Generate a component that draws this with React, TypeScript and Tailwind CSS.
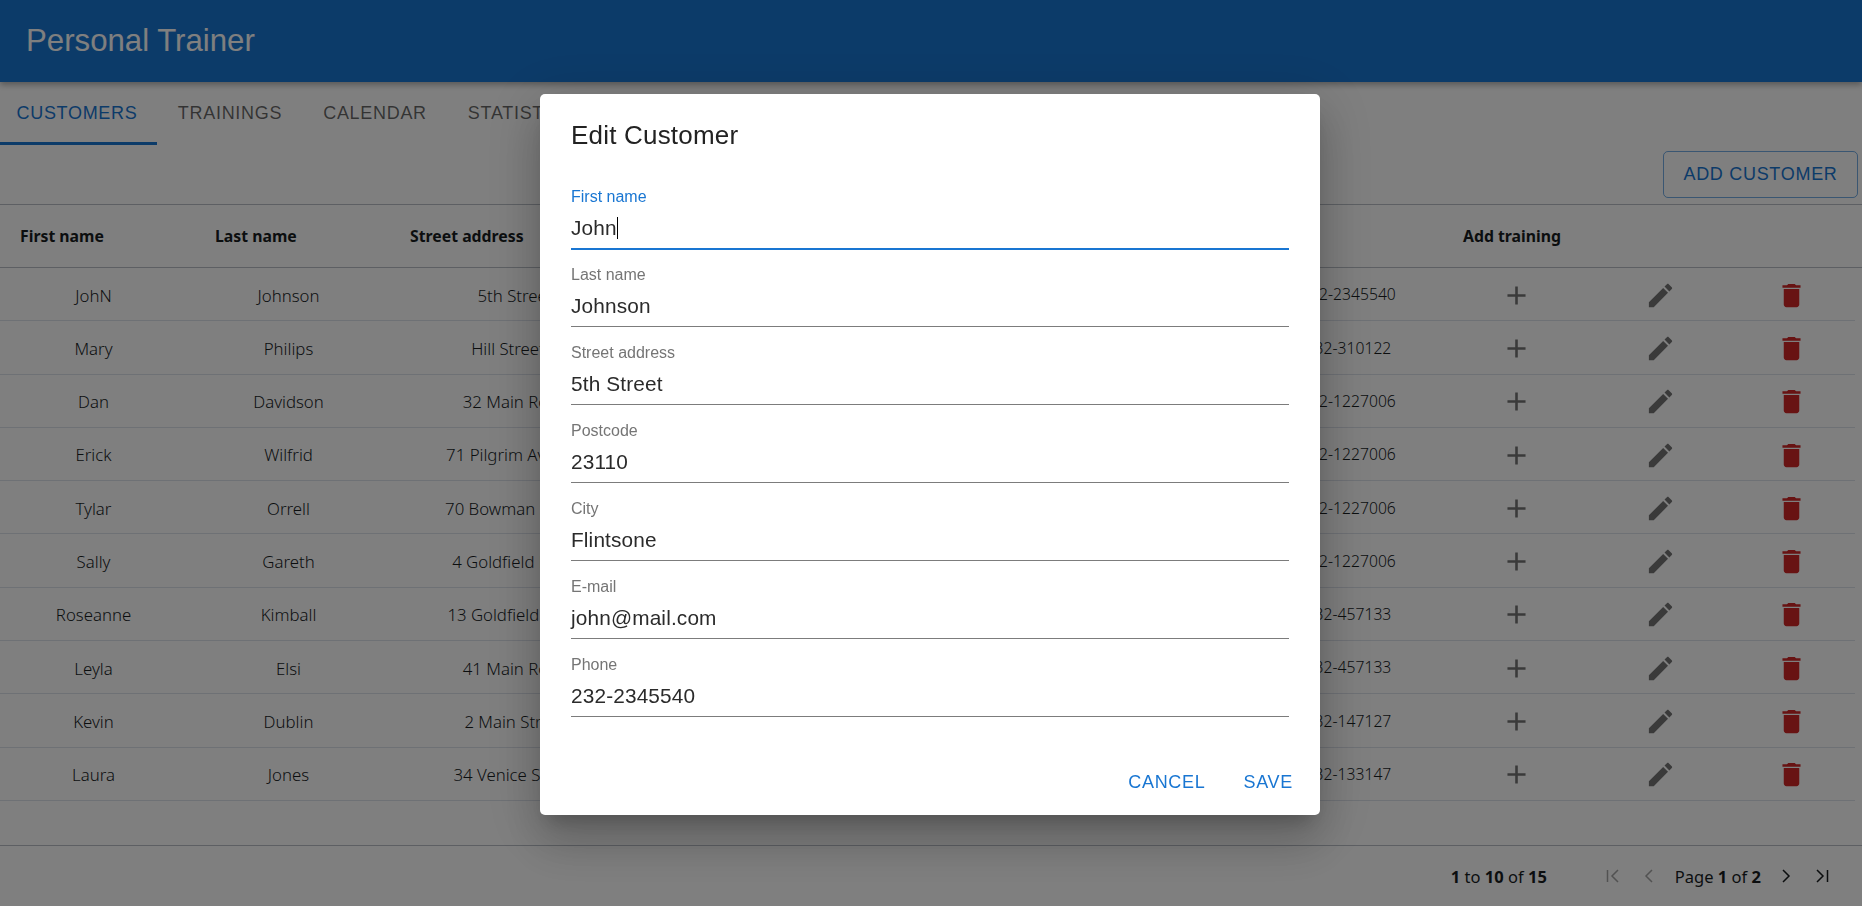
import { useState } from 'react'

const customers = [
  { first: 'JohN', last: 'Johnson', street: '5th Street', code: '23110', city: 'Flintsone', email: 'john@mail.com', phone: '232-2345540' },
  { first: 'Mary', last: 'Philips', street: 'Hill Street 5', code: '23110', city: 'Flintsone', email: 'mary@mail.com', phone: '232-310122' },
  { first: 'Dan', last: 'Davidson', street: '32 Main Road', code: '23110', city: 'Flintsone', email: 'dan@mail.com', phone: '232-1227006' },
  { first: 'Erick', last: 'Wilfrid', street: '71 Pilgrim Avenue', code: '23110', city: 'Chevy Chase', email: 'erick@mail.com', phone: '232-1227006' },
  { first: 'Tylar', last: 'Orrell', street: '70 Bowman Street', code: '23110', city: 'Chevy Chase', email: 'tylar@mail.com', phone: '232-1227006' },
  { first: 'Sally', last: 'Gareth', street: '4 Goldfield Road', code: '23110', city: 'Flintsone', email: 'sally@mail.com', phone: '232-1227006' },
  { first: 'Roseanne', last: 'Kimball', street: '13 Goldfield Road', code: '23110', city: 'Flintsone', email: 'rose@mail.com', phone: '232-457133' },
  { first: 'Leyla', last: 'Elsi', street: '41 Main Road', code: '23110', city: 'Flintsone', email: 'leyla@mail.com', phone: '232-457133' },
  { first: 'Kevin', last: 'Dublin', street: '2 Main Street', code: '23110', city: 'Flintsone', email: 'kevin@mail.com', phone: '232-147127' },
  { first: 'Laura', last: 'Jones', street: '34 Venice Street', code: '23110', city: 'Flintsone', email: 'laura@mail.com', phone: '232-133147' },
]

const fields = [
  { label: 'First name', value: 'John' },
  { label: 'Last name', value: 'Johnson' },
  { label: 'Street address', value: '5th Street' },
  { label: 'Postcode', value: '23110' },
  { label: 'City', value: 'Flintsone' },
  { label: 'E-mail', value: 'john@mail.com' },
  { label: 'Phone', value: '232-2345540' },
]

const gridCols = 'grid grid-cols-[195px_195px_250px_150px_160px_300px_193px_147px_140px_122px]'

function MuiIcon({ d, className }: { d: string; className?: string }) {
  return (
    <svg viewBox="0 0 24 24" className={className} fill="currentColor">
      <path d={d} />
    </svg>
  )
}

function PagerIcon({ d, disabled }: { d: string; disabled?: boolean }) {
  return (
    <svg
      viewBox="0 0 16 16"
      className={`h-4 w-4 ${disabled ? 'text-[#a4a4a4]' : 'text-[#181d1f]'}`}
      fill="none"
      stroke="currentColor"
      strokeWidth="1.5"
    >
      <path d={d} />
    </svg>
  )
}

function CustomerRow({ row }: { row: (typeof customers)[number] }) {
  return (
    <div className={`${gridCols} h-[53.3px] w-[1855px] items-center border-b border-[#dde2eb] pt-[2px] text-[16.8px] font-light text-[#181d1f]`}>
      <div className="pr-2 text-center">{row.first}</div>
      <div className="pr-2 text-center">{row.last}</div>
      <div className="text-center whitespace-nowrap">{row.street}</div>
      <div className="text-center">{row.code}</div>
      <div className="text-center">{row.city}</div>
      <div className="text-center">{row.email}</div>
      <div className="pl-1 text-center text-[15.7px]">{row.phone}</div>
      <div className="flex justify-center text-[#757575]">
        <MuiIcon className="h-[31px] w-[31px]" d="M19 13h-6v6h-2v-6H5v-2h6V5h2v6h6v2z" />
      </div>
      <div className="flex justify-center text-[#757575]">
        <MuiIcon
          className="h-[31px] w-[31px]"
          d="M3 17.25V21h3.75L17.81 9.94l-3.75-3.75L3 17.25zM20.71 7.04c.39-.39.39-1.02 0-1.41l-2.34-2.34c-.39-.39-1.02-.39-1.41 0l-1.83 1.83 3.75 3.75 1.83-1.83z"
        />
      </div>
      <div className="flex justify-center text-[#d02626]">
        <MuiIcon
          className="h-[31px] w-[31px]"
          d="M6 19c0 1.1.9 2 2 2h8c1.1 0 2-.9 2-2V7H6v12zM19 4h-3.5l-1-1h-5l-1 1H5v2h14V4z"
        />
      </div>
    </div>
  )
}

function EditField({ label, value, focused }: { label: string; value: string; focused?: boolean }) {
  return (
    <div
      className={`flex flex-col justify-end ${
        focused ? 'mb-[-1px] h-[79px] border-b-2 border-[#1976d2]' : 'h-[78px] border-b border-[#7c7c7c]'
      }`}
    >
      <div className={`text-[16px] leading-[20px] ${focused ? 'text-[#1976d2]' : 'text-[#757575]'}`}>{label}</div>
      <div className="mt-[7px] mb-[6px] flex h-[28px] items-center text-[20.8px] tracking-[0.15px] text-[#2b2b2b]">
        {value}
        {focused && <span className="h-[22px] w-px bg-black" />}
      </div>
    </div>
  )
}

export default function App() {
  const [open] = useState(true)

  return (
    <div className="relative h-[906px] w-[1862px] overflow-hidden bg-white font-['Liberation_Sans',Arial,sans-serif]">
      <header className="flex h-[82px] items-center bg-[#1976d2] pl-[26px] shadow-[0_3px_6px_rgba(0,0,0,0.3)]">
        <h1 className="text-[31.2px] text-white">Personal Trainer</h1>
      </header>

      <nav className="flex h-[63px] text-[18px] tracking-[0.7px] text-black/60">
        <div className="flex w-[157px] items-center justify-center border-y-[3px] border-t-transparent border-b-[#1976d2] pr-[3px] text-[#1976d2]">CUSTOMERS</div>
        <div className="flex w-[146px] items-center justify-center">TRAININGS</div>
        <div className="flex w-[144px] items-center justify-center">CALENDAR</div>
        <div className="flex w-[150px] items-center justify-center">STATISTICS</div>
      </nav>

      <div className="flex h-[59px] items-start justify-end pt-[6px] pr-[4px]">
        <button className="flex h-[47px] w-[195px] items-center justify-center rounded-[5px] border border-[#1976d2]/60 text-[18px] tracking-[0.7px] text-[#1976d2]">
          ADD CUSTOMER
        </button>
      </div>

      <div className="font-['Noto_Sans',sans-serif]">
        <div className={`${gridCols} h-[64px] items-center border-y border-[#babfc7] pt-[2px] text-[15.8px] font-bold text-[#181d1f]`}>
          <div className="pl-5">First name</div>
          <div className="pl-5">Last name</div>
          <div className="pl-5">Street address</div>
          <div className="pl-5">Postcode</div>
          <div className="pl-5">City</div>
          <div className="pl-5">E-mail</div>
          <div className="pl-5">Phone</div>
          <div className="pl-5">Add training</div>
        </div>

        {customers.map((row) => (
          <CustomerRow key={row.first} row={row} />
        ))}

        <div className="h-[44px]" />
        <div className="flex h-[61px] items-center justify-end border-t border-[#babfc7] pr-[32px] text-[16.5px] text-[#181d1f]">
          <span className="pt-[3px]">
            <b>1</b> to <b>10</b> of <b>15</b>
          </span>
          <div className="ml-[58px] flex items-center">
            <PagerIcon disabled d="M2.5 2v12M13 2L7 8l6 6" />
            <div className="ml-[20px]">
              <PagerIcon disabled d="M11 2L5 8l6 6" />
            </div>
            <span className="ml-[18px] pt-[3px]">
              Page <b>1</b> of <b>2</b>
            </span>
            <div className="ml-[17px]">
              <PagerIcon d="M5 2l6 6-6 6" />
            </div>
            <div className="ml-[20px]">
              <PagerIcon d="M3 2l6 6-6 6M13.5 2v12" />
            </div>
          </div>
        </div>
      </div>

      {open && (
        <div className="fixed inset-0 flex items-start justify-center bg-black/50">
          <div className="mt-[94px] ml-[-2px] h-[721px] w-[780px] rounded-[5px] bg-white px-[31px] shadow-[0_13px_18px_-8px_rgba(0,0,0,0.2),0_29px_45px_3px_rgba(0,0,0,0.14),0_11px_55px_10px_rgba(0,0,0,0.12)]">
            <h2 className="mt-[24px] h-[32px] text-[26px] leading-[34px] tracking-[0.2px] text-[#222]">Edit Customer</h2>
            <div className="mt-[21px]">
              <EditField focused label={fields[0].label} value={fields[0].value} />
              {fields.slice(1).map((f) => (
                <EditField key={f.label} label={f.label} value={f.value} />
              ))}
            </div>
            <div className="mt-[52px] -mr-[4px] flex justify-end gap-[38px] text-[18px] tracking-[0.7px] text-[#1976d2]">
              <span>CANCEL</span>
              <span>SAVE</span>
            </div>
          </div>
        </div>
      )}
    </div>
  )
}
